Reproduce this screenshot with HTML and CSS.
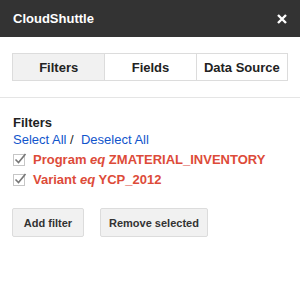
FILE: index.html
```html
<!DOCTYPE html>
<html lang="en">
<head>
  <meta charset="UTF-8" />
  <title>CloudShuttle</title>
  <link rel="stylesheet" href="styles.css">
</head>
<body>

  <div class="header">
    <span class="title">CloudShuttle</span>
    <svg class="close" width="10" height="10" viewBox="0 0 10 10">
      <path d="M1 1 L9 9 M9 1 L1 9" stroke="#fff" stroke-width="2.4"/>
    </svg>
  </div>

  <div class="tabs">
    <div class="tab selected">Filters</div>
    <div class="tab">Fields</div>
    <div class="tab">Data Source</div>
  </div>

  <div class="section">
    <div class="heading">Filters</div>
    <div class="links">
      <a href="#">Select All</a> /&nbsp; <a href="#">Deselect All</a>
    </div>

    <div class="filter">
      <svg class="check" width="14" height="13" viewBox="0 0 14 13">
        <rect x="0.5" y="1.5" width="11" height="11" fill="#fff" stroke="#c6c6c6"/>
        <path d="M2.5 6.5 L5.5 9.5 L12.5 1" fill="none" stroke="#777" stroke-width="1.6"/>
      </svg>
      <span>Program <i>eq</i> ZMATERIAL_INVENTORY</span>
    </div>
    <div class="filter">
      <svg class="check" width="14" height="13" viewBox="0 0 14 13">
        <rect x="0.5" y="1.5" width="11" height="11" fill="#fff" stroke="#c6c6c6"/>
        <path d="M2.5 6.5 L5.5 9.5 L12.5 1" fill="none" stroke="#777" stroke-width="1.6"/>
      </svg>
      <span>Variant <i>eq</i> YCP_2012</span>
    </div>

    <div class="buttons">
      <button>Add filter</button>
      <button>Remove selected</button>
    </div>
  </div>

</body>
</html>
```

FILE: styles.css
```css
body {
  margin: 0;
  font-family: 'Liberation Sans', Arial, sans-serif;
  font-size: 13px;
  color: #222;
  background: #fff;
}
.header {
  height: 37px;
  background-color: #333;
  color: #fff;
  display: flex;
  align-items: center;
  justify-content: space-between;
  padding: 0 13px;
}
.title {
  font-weight: bold;
  font-size: 13px;
}
.tabs {
  display: grid;
  grid-template-columns: 1fr 1fr 1fr;
  margin: 16px 12px 0 12px;
  border: 1px solid #dcdcdc;
  height: 26px;
}
.tab {
  display: flex;
  align-items: center;
  justify-content: center;
  font-weight: bold;
  border-left: 1px solid #dcdcdc;
}
.tab:first-child {
  border-left: none;
}
.tab.selected {
  background-color: #f1f1f1;
}
.section {
  margin-top: 16px;
  border-top: 1px solid #e5e5e5;
  padding: 16px 12px 0 13px;
}
.heading {
  font-weight: bold;
  line-height: 17px;
}
.links {
  line-height: 18px;
}
.links a {
  color: #15c;
  text-decoration: none;
}
.filter {
  display: flex;
  align-items: center;
  gap: 6px;
  height: 20px;
  color: #dd4b39;
  font-weight: bold;
}
.buttons {
  display: flex;
  gap: 16px;
  margin-top: 19px;
  margin-left: -1px;
}
button {
  font-family: 'Liberation Sans', Arial, sans-serif;
  font-size: 11px;
  font-weight: bold;
  color: #333;
  background-color: #f1f1f1;
  border: 1px solid #dcdcdc;
  border-radius: 2px;
  height: 29px;
  min-width: 72px;
  padding: 0 8px;
}
```
